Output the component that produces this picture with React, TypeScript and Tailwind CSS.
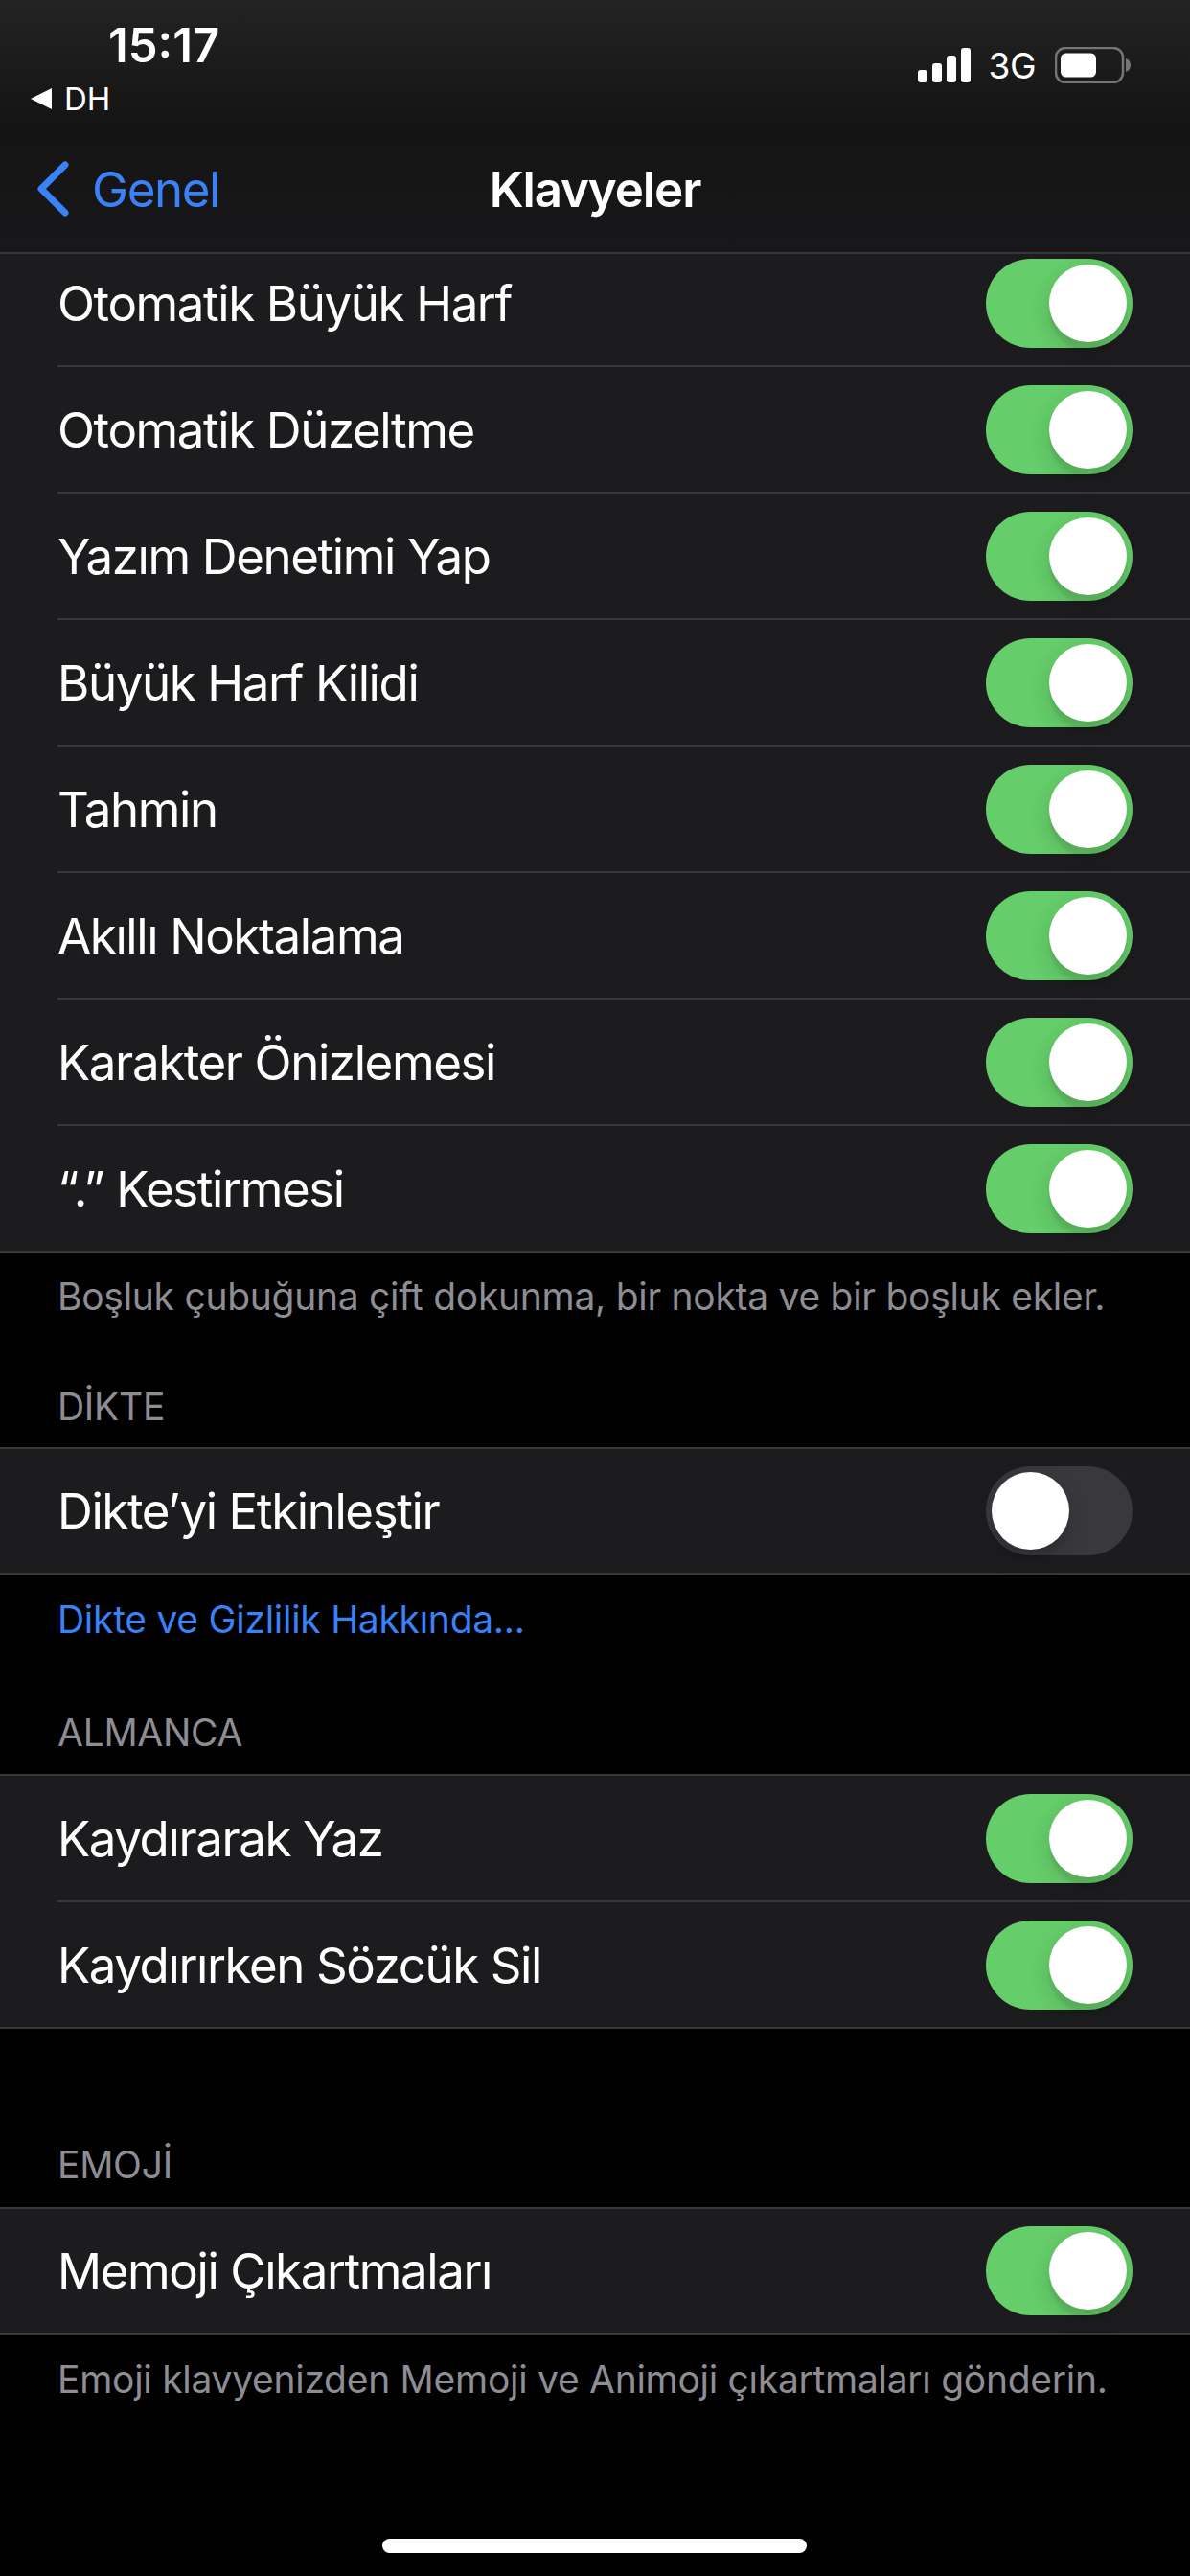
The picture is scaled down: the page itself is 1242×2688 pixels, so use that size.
const topRows = [
  "Otomatik Büyük Harf",
  "Otomatik Düzeltme",
  "Yazım Denetimi Yap",
  "Büyük Harf Kilidi",
  "Tahmin",
  "Akıllı Noktalama",
  "Karakter Önizlemesi",
  "“.” Kestirmesi",
];

function Toggle({ on = true }: { on?: boolean }) {
  return (
    <div className={`flex h-[93px] w-[153px] shrink-0 items-center rounded-full px-[6px] ${on ? "justify-end bg-[#65cd69]" : "justify-start bg-[#39393d]"}`}>
      <div className="h-[81px] w-[81px] rounded-full bg-white shadow-[0_9px_24px_rgba(0,0,0,0.15),0_9px_3px_rgba(0,0,0,0.06)]" />
    </div>
  );
}

function Row({ label, on, last, height = "h-[132px]" }: { label: string; on?: boolean; last?: boolean; height?: string }) {
  return (
    <div className={`flex pl-[60px] ${height}`}>
      <div className={`flex flex-1 items-center justify-between pr-[60px] ${last ? "" : "border-b-[2px] border-[#38383a]"}`}>
        <span className="text-[51px] leading-none tracking-[-1.4px] text-white">{label}</span>
        <Toggle on={on} />
      </div>
    </div>
  );
}

function Group({ labels, on }: { labels: string[]; on?: boolean }) {
  const lastHeight = labels.length === 1 ? "h-[129px]" : "h-[130px]";
  return (
    <div className="border-y-[2px] border-[#38383a] bg-[#1c1c1e]">
      {labels.map((label, i) => {
        const last = i === labels.length - 1;
        return <Row key={label} label={label} on={on} last={last} height={last ? lastHeight : "h-[132px]"} />;
      })}
    </div>
  );
}

function Caption({ children, className = "text-[#8d8d93]" }: { children: React.ReactNode; className?: string }) {
  return <p className={`px-[60px] text-[39px] leading-[48px] tracking-[-0.28px] ${className}`}>{children}</p>;
}

function Signal() {
  return (
    <svg width="56" height="36" viewBox="0 0 56 36" fill="white">
      <rect x="0" y="23" width="10" height="13" rx="3" />
      <rect x="15" y="16" width="10" height="20" rx="3" />
      <rect x="30" y="8" width="10" height="28" rx="3" />
      <rect x="45" y="0" width="10" height="36" rx="3" />
    </svg>
  );
}

function Battery() {
  return (
    <svg width="80" height="38" viewBox="0 0 80 38">
      <rect x="1" y="1" width="70" height="36" rx="10" fill="none" stroke="#757575" strokeWidth="2.5" />
      <rect x="6" y="6.5" width="37" height="25" rx="5.5" fill="white" />
      <path d="M74 12c3 1 5 3.500 5 7s-2 6-5 7z" fill="#757575" />
    </svg>
  );
}

export default function App() {
  return (
    <div className="relative flex h-[2688px] w-[1242px] flex-col overflow-hidden bg-black font-['Inter',sans-serif]">
      <header className="relative z-10 h-[265px] shrink-0 border-b-[2px] border-[#363638] bg-gradient-to-b from-[#232324] via-[#141415] to-[#18181a]">
        <div className="flex items-start justify-between pr-[61px]">
          <div className="pl-[32px]">
            <div className="pl-[81px] pt-[25px] text-[49px] font-semibold leading-[46px] text-white">15:17</div>
            <div className="mt-[14px] flex items-center gap-[13px] text-[33px] leading-[36px] text-white">
              <span className="h-0 w-0 border-y-[11px] border-r-[22px] border-y-transparent border-r-white" />
              DH
            </div>
          </div>
          <div className="mt-[49px] flex items-center">
            <Signal />
            <span className="ml-[18px] mr-[20px] text-[37px] leading-none tracking-[-0.5px] text-white">3G</span>
            <Battery />
          </div>
        </div>
        <div className="relative mt-[42px] flex h-[68px] items-center justify-center">
          <div className="absolute left-[36px] flex items-center gap-[22px] text-[#3a82f7]">
            <svg width="38" height="60" viewBox="0 0 38 60" fill="none" stroke="currentColor" strokeWidth="7" strokeLinecap="round" strokeLinejoin="round">
              <path d="M32 5L7 30l25 25" />
            </svg>
            <span className="text-[51px] leading-none tracking-[-1.4px]">Genel</span>
          </div>
          <span className="text-[51px] font-semibold leading-none tracking-[-1.1px] text-white">Klavyeler</span>
        </div>
      </header>

      <main className="flex flex-col">
        <div className="-mt-[14px] border-b-[2px] border-[#38383a] bg-[#1c1c1e]">
          {topRows.map((label, i) => {
            const last = i === topRows.length - 1;
            return <Row key={label} label={label} last={last} height={last ? "h-[130px]" : "h-[132px]"} />;
          })}
        </div>
        <Caption className="mt-[22px] text-[#8d8d93]">Boşluk çubuğuna çift dokunma, bir nokta ve bir boşluk ekler.</Caption>

        <Caption className="mt-[67px] mb-[18px] text-[#8d8d93]">DİKTE</Caption>
        <Group labels={["Dikte’yi Etkinleştir"]} on={false} />
        <Caption className="mt-[23px] text-[#3a82f7]">Dikte ve Gizlilik Hakkında...</Caption>

        <Caption className="mt-[70px] mb-[19px] text-[#8d8d93]">ALMANCA</Caption>
        <Group labels={["Kaydırarak Yaz", "Kaydırırken Sözcük Sil"]} />

        <Caption className="mt-[118px] mb-[20px] text-[#8d8d93]">EMOJİ</Caption>
        <Group labels={["Memoji Çıkartmaları"]} />
        <Caption className="mt-[23px] text-[#8d8d93]">Emoji klavyenizden Memoji ve Animoji çıkartmaları gönderin.</Caption>
      </main>

      <div className="absolute bottom-[24px] left-[399px] h-[15px] w-[443px] rounded-full bg-white" />
    </div>
  );
}
